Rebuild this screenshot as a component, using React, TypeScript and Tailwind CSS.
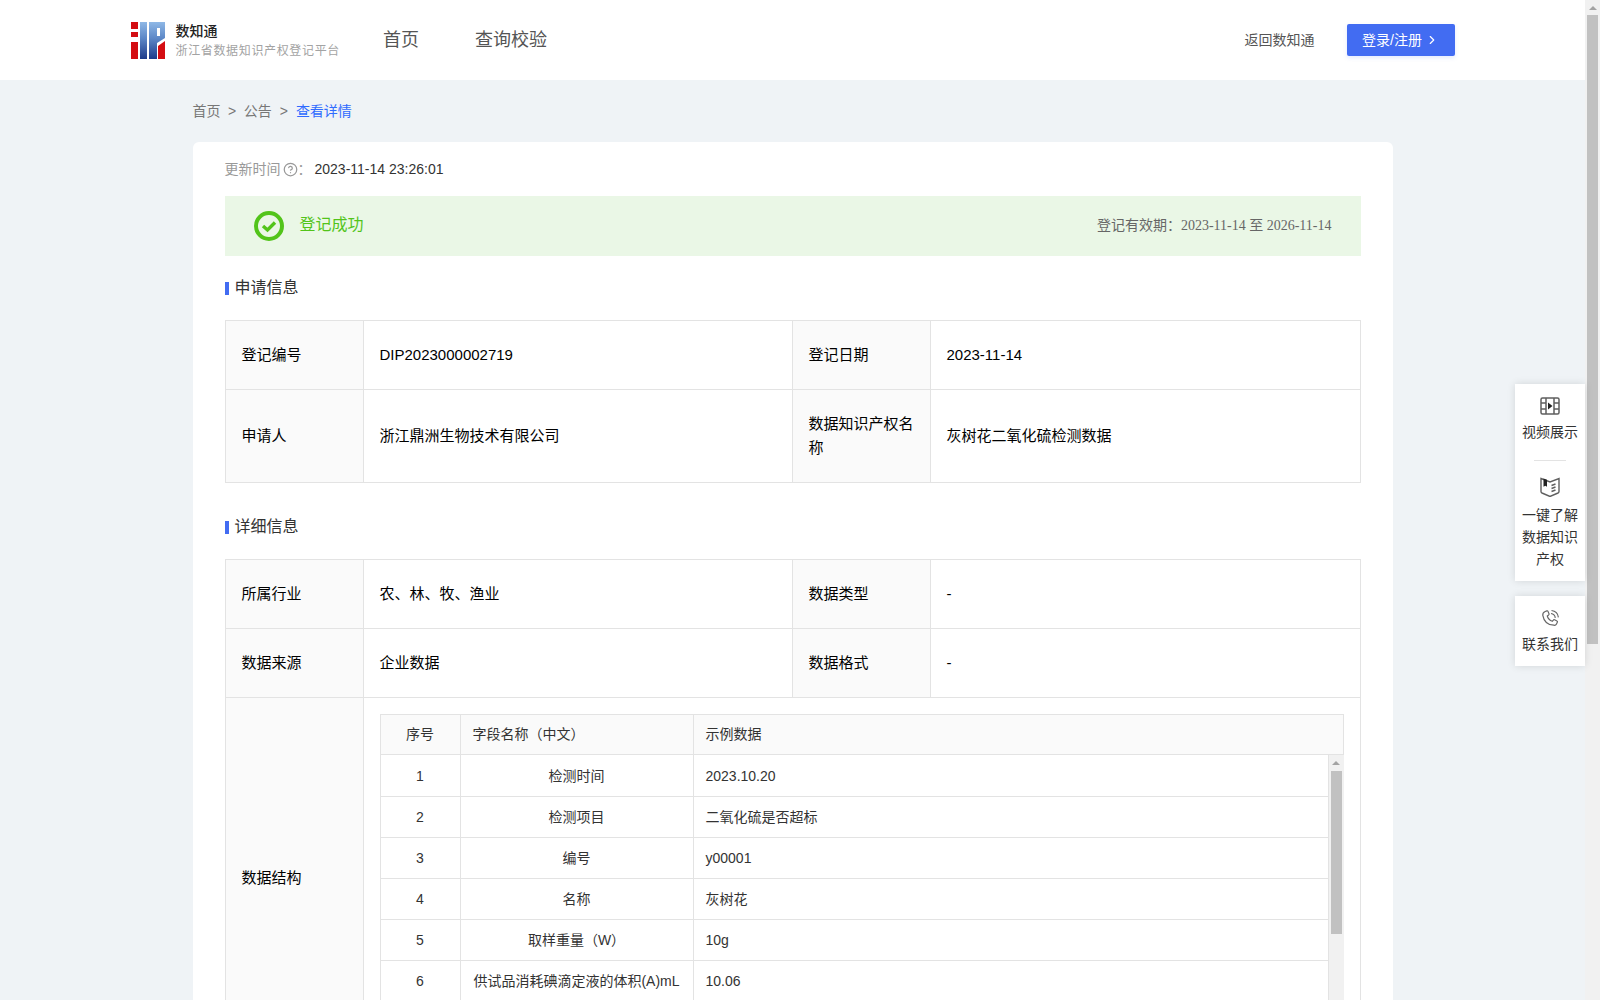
import { ChevronRight, CircleHelp } from "lucide-react";

function Logo() {
  return (
    <svg width="34" height="37" viewBox="0 0 34 37" className="shrink-0">
      <defs>
        <linearGradient id="logoBlue" x1="0" y1="0" x2="0" y2="1">
          <stop offset="0" stopColor="#8fb8e6" />
          <stop offset="0.45" stopColor="#5b86c6" />
          <stop offset="1" stopColor="#1d3a8a" />
        </linearGradient>
      </defs>
      <rect x="0" y="0" width="7" height="7" fill="#d40d12" />
      <rect x="0" y="10" width="7" height="5" fill="#d40d12" />
      <rect x="0" y="20" width="7" height="17" fill="#d40d12" />
      <rect x="9" y="0" width="7" height="37" fill="url(#logoBlue)" />
      <path d="M18 0h16v16l-8 5v16h-8z" fill="url(#logoBlue)" />
      <rect x="26" y="6" width="3" height="8" fill="#ffffff" />
      <path d="M27 37V24l7-5v18z" fill="#d40d12" />
    </svg>
  );
}

function FilmIcon() {
  return (
    <svg width="20" height="20" viewBox="0 0 20 20" fill="none" stroke="#5f5f5f" strokeWidth="1.5">
      <rect x="1" y="2" width="18" height="16" rx="1.5" />
      <path d="M6 2v16M14 2v16M1 7h5M1 13h5M14 7h5M14 13h5" />
      <path d="M8 6.500v7l4.500-3.500z" fill="#222" stroke="none" />
    </svg>
  );
}

function BookIcon() {
  return (
    <svg width="20" height="20" viewBox="0 0 20 20" fill="none" stroke="#5f5f5f" strokeWidth="1.4">
      <path d="M1 1.500l9 3.500 9-3.500V14.500c0 .8-.4 1.200-1 1.500l-8 3.500-8-3.500c-.6-.3-1-.7-1-1.500z" />
      <path d="M3.500 1.500l3.500 1.300v7l-1.700-1-1.800 1z" fill="#222" stroke="none" />
      <path d="M11.500 8.500l4-1.500M11.500 11.500l4-1.500M11.500 14.500l4-1.500" />
    </svg>
  );
}

function PhoneIcon() {
  return (
    <svg width="20" height="20" viewBox="0 0 20 20" fill="none" stroke="#666" strokeWidth="1.2">
      <path d="M5.200 2.500l1.600-.6c.5-.2 1 0 1.200.5l1 2.400c.2.500 0 1-.4 1.300l-1.300.9c.7 2.500 2.600 4.500 5 5.300l1-1.200c.3-.4.9-.5 1.300-.3l2.300 1.200c.5.2.7.800.4 1.300l-.8 1.600c-.5 1-1.600 1.600-2.700 1.300C7.600 15.900 3.800 12 2.800 6.300c-.2-1.600.9-3.200 2.400-3.800z" />
      <path d="M11 4.500c2.300.3 4 2 4.300 4.300M11.500 1.500c3.700.4 6.500 3.200 6.900 6.900" />
    </svg>
  );
}

function CheckIcon() {
  return (
    <svg width="30" height="30" viewBox="0 0 30 30" fill="none" stroke="#52c41a" className="shrink-0">
      <circle cx="15" cy="15" r="13" strokeWidth="4" />
      <path d="M9 15l4.500 4 7.500-7.500" strokeWidth="3.400" />
    </svg>
  );
}

function SectionTitle({ text }: { text: string }) {
  return (
    <div className="flex items-center h-[22px] text-[16px] text-[#333]">
      <span className="w-1 h-[13px] bg-[#426cf2] mr-[6px]"></span>
      {text}
    </div>
  );
}

const labelCell = "border border-[#e3e3e3] bg-[#fafafa] px-4 pb-[1px] text-[15px] leading-[24px] text-[#000]";
const valueCell = "border border-[#e3e3e3] px-4 pb-[1px] text-[15px] leading-[24px] text-[#000]";
const headCell = "border border-[#e3e3e3] px-[12px] h-[40px] text-[14px] text-[#333] font-normal";
const bodyCell = "border border-[#e3e3e3] border-t-0 px-[12px] pt-[2px] h-[41px] text-[14px] text-[#333]";

const fields = [
  { no: 1, name: "检测时间", sample: "2023.10.20" },
  { no: 2, name: "检测项目", sample: "二氧化硫是否超标" },
  { no: 3, name: "编号", sample: "y00001" },
  { no: 4, name: "名称", sample: "灰树花" },
  { no: 5, name: "取样重量（W）", sample: "10g" },
  { no: 6, name: "供试品消耗碘滴定液的体积(A)mL", sample: "10.06" },
];

function OuterCols() {
  return (
    <colgroup>
      <col className="w-[138px]" />
      <col className="w-[429px]" />
      <col className="w-[138px]" />
      <col />
    </colgroup>
  );
}

function Scrollbar() {
  return (
    <div className="flex flex-col items-center w-[15px] h-full bg-[#f1f1f1] shrink-0">
      <div className="h-[15px] flex items-center justify-center">
        <div className="w-0 h-0 border-x-[4px] border-x-transparent border-b-[4px] border-b-[#a3a3a3]"></div>
      </div>
    </div>
  );
}

export default function App() {
  return (
    <div className="flex h-screen overflow-hidden bg-[#eff3f6] font-['Liberation_Sans','Noto_Sans_CJK_SC',sans-serif]">
      <div className="flex-1 min-w-0 overflow-hidden">
        {/* Header */}
        <header className="h-20 bg-white">
          <div className="w-[1324px] h-full mx-auto flex items-center">
            <Logo />
            <div className="ml-[11px] mr-[43px]">
              <div className="text-[14px] leading-[20px] font-medium text-[#222]">数知通</div>
              <div className="text-[12px] leading-[18px] mt-[1px] tracking-[0.65px] text-[#a3a3a3]">浙江省数据知识产权登记平台</div>
            </div>
            <nav className="flex gap-14 text-[18px] text-[#555]">
              <span>首页</span>
              <span>查询校验</span>
            </nav>
            <div className="ml-auto text-[14px] text-[#555]">返回数知通</div>
            <button className="ml-[32px] w-[108px] h-8 rounded-[2px] bg-[#426cf2] text-white text-[14px] flex items-center justify-center gap-[3px] shadow-[0_2px_4px_rgba(66,108,242,0.15)]">
              登录/注册
              <ChevronRight size={14} />
            </button>
          </div>
        </header>

        <main className="w-[1200px] mx-auto">
          {/* Breadcrumb */}
          <div className="h-[62px] flex items-center text-[14px] text-[#777]">
            <span>首页</span>
            <span className="mx-[7.5px]">&gt;</span>
            <span>公告</span>
            <span className="mx-2">&gt;</span>
            <span className="text-[#2f6bff]">查看详情</span>
          </div>

          <div className="bg-white rounded-t-[6px] px-8 pt-4">
            <div className="flex items-center h-[22px] text-[14px] text-[#999]">
              更新时间
              <CircleHelp size={15} className="ml-[2px]" />
              <span>：</span>
              <span className="text-[#333] ml-[3px]">2023-11-14 23:26:01</span>
            </div>

            {/* Status banner */}
            <div className="mt-4 h-[60px] bg-[#eaf7e6] flex items-center px-[29px]">
              <CheckIcon />
              <span className="ml-4 pb-[2px] text-[16px] text-[#52c41a]">登记成功</span>
              <span className="ml-auto pb-[2px] text-[14px] text-[#666]">
                登记有效期：
                <span className="font-['Liberation_Serif','Noto_Sans_CJK_SC',serif]">2023-11-14 至 2026-11-14</span>
              </span>
            </div>

            <div className="mt-[21px] mb-[21px]">
              <SectionTitle text="申请信息" />
            </div>
            <table className="w-full table-fixed border-collapse">
              <OuterCols />
              <tbody>
                <tr className="h-[69px]">
                  <td className={labelCell}>登记编号</td>
                  <td className={valueCell}>DIP2023000002719</td>
                  <td className={labelCell}>登记日期</td>
                  <td className={valueCell}>2023-11-14</td>
                </tr>
                <tr className="h-[93px]">
                  <td className={labelCell}>申请人</td>
                  <td className={valueCell}>浙江鼎洲生物技术有限公司</td>
                  <td className={labelCell}>数据知识产权名称</td>
                  <td className={valueCell}>灰树花二氧化硫检测数据</td>
                </tr>
              </tbody>
            </table>

            <div className="mt-[33px] mb-[21px]">
              <SectionTitle text="详细信息" />
            </div>
            <table className="w-full table-fixed border-collapse">
              <OuterCols />
              <tbody>
                <tr className="h-[69px]">
                  <td className={labelCell}>所属行业</td>
                  <td className={valueCell}>农、林、牧、渔业</td>
                  <td className={labelCell}>数据类型</td>
                  <td className={valueCell}>-</td>
                </tr>
                <tr className="h-[69px]">
                  <td className={labelCell}>数据来源</td>
                  <td className={valueCell}>企业数据</td>
                  <td className={labelCell}>数据格式</td>
                  <td className={valueCell}>-</td>
                </tr>
                <tr className="h-[362px]">
                  <td className={labelCell}>数据结构</td>
                  <td colSpan={3} className="border border-[#e3e3e3] p-4 align-top">
                    <table className="w-full table-fixed border-collapse">
                      <colgroup>
                        <col className="w-[80px]" />
                        <col className="w-[233px]" />
                        <col />
                      </colgroup>
                      <thead>
                        <tr className="bg-[#fafafa]">
                          <th className={`${headCell} text-center`}>序号</th>
                          <th className={`${headCell} text-left`}>字段名称（中文）</th>
                          <th className={`${headCell} text-left`}>示例数据</th>
                        </tr>
                      </thead>
                    </table>
                    <div className="flex h-[288px]">
                      <table className="flex-1 min-w-0 table-fixed border-collapse self-start">
                        <colgroup>
                          <col className="w-[80px]" />
                          <col className="w-[233px]" />
                          <col />
                        </colgroup>
                        <tbody>
                          {fields.map((f) => (
                            <tr key={f.no}>
                              <td className={`${bodyCell} text-center`}>{f.no}</td>
                              <td className={`${bodyCell} text-center`}>{f.name}</td>
                              <td className={bodyCell}>{f.sample}</td>
                            </tr>
                          ))}
                        </tbody>
                      </table>
                      <div className="relative">
                        <Scrollbar />
                        <div className="absolute top-[16px] left-[2px] w-[11px] h-[163px] bg-[#c1c1c1]"></div>
                      </div>
                    </div>
                  </td>
                </tr>
              </tbody>
            </table>
          </div>
        </main>
      </div>

      {/* Page scrollbar */}
      <div className="relative">
        <Scrollbar />
        <div className="absolute top-[15px] left-[2px] w-[11px] h-[629px] bg-[#c1c1c1]"></div>
      </div>

      {/* Floating side panel */}
      <div className="absolute right-[15px] top-[384px] w-[70px] flex flex-col gap-[15px] text-[14px] leading-[22px] text-[#333] text-center">
        <div className="bg-white shadow-[0_0_8px_rgba(0,0,0,0.12)] pt-[12px] pb-[11px]">
          <div className="flex justify-center"><FilmIcon /></div>
          <div className="mt-[5px]">视频展示</div>
          <div className="w-8 h-px bg-[#e3e3e3] mx-auto mt-[17px] mb-[16px]"></div>
          <div className="flex justify-center"><BookIcon /></div>
          <div className="mt-[7px]">一键了解<br />数据知识<br />产权</div>
        </div>
        <div className="bg-white shadow-[0_0_8px_rgba(0,0,0,0.12)] pt-[13px] pb-[11px]">
          <div className="flex justify-center"><PhoneIcon /></div>
          <div className="mt-[4px]">联系我们</div>
        </div>
      </div>
    </div>
  );
}
